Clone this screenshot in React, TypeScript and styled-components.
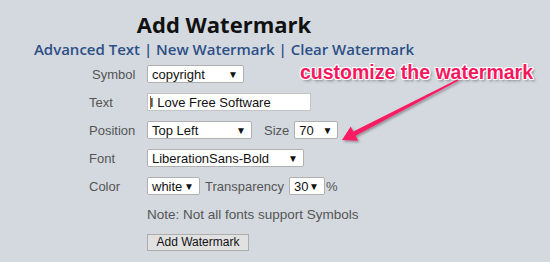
import React from 'react';
import styled, {createGlobalStyle} from 'styled-components';

const GlobalStyle = createGlobalStyle`
    html, body {
        margin: 0;
        padding: 0;
        background: #d4d9df;
    }
    body {
        width: 550px;
        height: 262px;
        overflow: hidden;
        font-family: "Liberation Sans", Arial, sans-serif;
    }
`;

interface SelectProps {
    value: string;
    width: number;
}

function Select({value, width}: SelectProps) {
    return (
        <SelectBox $width={width}>
            <span>{value}</span>
            <SelectArrow>▼</SelectArrow>
        </SelectBox>
    );
}

function App() {
    return (
        <>
            <GlobalStyle/>
            <Page>
                <Main>
                    <Title>Add Watermark</Title>
                    <Links>
                        <a>Advanced Text</a> | <a>New Watermark</a> | <a>Clear Watermark</a>
                    </Links>
                    <Form>
                        <Label $indent={3}>Symbol</Label>
                        <Controls><Select value="copyright" width={97}/></Controls>

                        <Label>Text</Label>
                        <Controls>
                            <TextInput><Caret/>I Love Free Software</TextInput>
                        </Controls>

                        <Label>Position</Label>
                        <Controls>
                            <Select value="Top Left" width={105}/>
                            <Inline $gap={12}>Size</Inline>
                            <Select value="70" width={44}/>
                        </Controls>

                        <Label>Font</Label>
                        <Controls><Select value="LiberationSans-Bold" width={157}/></Controls>

                        <Label>Color</Label>
                        <Controls>
                            <Select value="white" width={53}/>
                            <Inline $gap={5}>Transparency</Inline>
                            <Select value="30" width={36}/>
                            <Inline $gap={1}>%</Inline>
                        </Controls>

                        <span/>
                        <Controls><Note>Note: Not all fonts support Symbols</Note></Controls>

                        <span/>
                        <Controls><Button>Add Watermark</Button></Controls>
                    </Form>
                </Main>

                <Callout>customize the watermark</Callout>
                <Arrow width="550" height="262" viewBox="0 0 550 262">
                    <defs>
                        <filter id="arrowShadow" x="-20%" y="-20%" width="140%" height="140%">
                            <feDropShadow dx="1.5" dy="1.5" stdDeviation="1.2" floodColor="#000" floodOpacity="0.35"/>
                        </filter>
                    </defs>
                    <polygon
                        points="457.6,79.3 353.3,131.4 350.7,126.5 342,140 358.1,140.7 355.5,135.8 458.4,80.7"
                        fill="#f81c63"
                        filter="url(#arrowShadow)"
                    />
                </Arrow>
            </Page>
        </>
    );
}

export default App;

const Page = styled.div`
    position: relative;
    width: 550px;
    height: 262px;
`;

const Main = styled.div`
    width: 448px;
    padding-top: 11px;
`;

const Title = styled.h1`
    margin: 0;
    text-align: center;
    font-family: "Open Sans", sans-serif;
    font-weight: 700;
    font-size: 22px;
    line-height: 26px;
    color: #111;
`;

const Links = styled.div`
    margin-top: 3px;
    text-align: center;
    font-family: "Open Sans", sans-serif;
    font-weight: 600;
    font-size: 15px;
    line-height: 18px;
    color: #2c4f86;

    a {
        color: #2c4f86;
        cursor: pointer;
    }
`;

const Form = styled.div`
    display: grid;
    grid-template-columns: 58px auto;
    grid-auto-rows: 28px;
    margin: 2px 0 0 89px;
    font-size: 13px;
    color: #555;
`;

const Label = styled.div<{ $indent?: number }>`
    display: flex;
    align-items: center;
    padding-left: ${p => p.$indent ?? 0}px;
`;

const Controls = styled.div`
    display: flex;
    align-items: center;
`;

const Inline = styled.span<{ $gap: number }>`
    margin: 0 5px 0 ${p => p.$gap}px;
`;

const SelectBox = styled.div<{ $width: number }>`
    box-sizing: border-box;
    width: ${p => p.$width}px;
    height: 18px;
    display: flex;
    align-items: center;
    justify-content: space-between;
    padding: 0 5px 0 4px;
    background: #fff;
    border: 1px solid #b0b0b0;
    border-radius: 2px;
    color: #111;
    font-size: 13px;
`;

const SelectArrow = styled.span`
    font-size: 10px;
    color: #111;
`;

const TextInput = styled.div`
    box-sizing: border-box;
    width: 164px;
    height: 18px;
    display: flex;
    align-items: center;
    padding: 0 2px;
    background: #fff;
    border: 1px solid #c4c4c4;
    color: #111;
    font-size: 13px;
`;

const Caret = styled.span`
    width: 1px;
    height: 13px;
    margin-right: -1px;
    background: #9a6a2a;
`;

const Note = styled.span`
    font-size: 13.5px;
    color: #555;
`;

const Button = styled.button`
    box-sizing: border-box;
    height: 17px;
    width: 102px;
    padding: 0;
    font-family: "Liberation Sans", Arial, sans-serif;
    font-size: 12px;
    color: #111;
    background: #e1e1e1;
    border: 1px solid #adadad;
    border-radius: 0;
`;

const Callout = styled.div`
    position: absolute;
    left: 300px;
    top: 61px;
    font-family: "Liberation Sans", Arial, sans-serif;
    font-weight: 700;
    font-size: 19.5px;
    line-height: 22px;
    color: #f8175f;
    text-shadow: 1px 0 0 #fff, -1px 0 0 #fff, 0 1px 0 #fff, 0 -1px 0 #fff,
    1px 1px 0 #fff, -1px -1px 0 #fff, 1px -1px 0 #fff, -1px 1px 0 #fff,
    2px 2px 3px rgba(0, 0, 0, 0.45);
    white-space: nowrap;
`;

const Arrow = styled.svg`
    position: absolute;
    left: 0;
    top: 0;
    pointer-events: none;
`;
